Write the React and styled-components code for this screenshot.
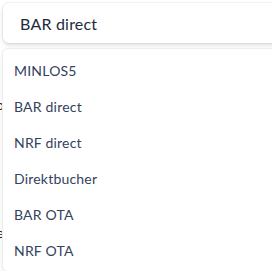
import React from "react";
import styled, { createGlobalStyle } from "styled-components";

const options = ["MINLOS5", "BAR direct", "NRF direct", "Direktbucher", "BAR OTA", "NRF OTA"];

const App = () => {
  return (
    <>
      <GlobalStyle />
      <Page>
        <Behind>
          <Peek $top={96}>Preiso</Peek>
          <Peek $top={224}>Rate</Peek>
        </Behind>
        <SelectBox>
          <Value>BAR direct</Value>
        </SelectBox>
        <Menu>
          {options.map((o) => (
            <Option key={o}>{o}</Option>
          ))}
        </Menu>
      </Page>
    </>
  );
};

export default App;

const GlobalStyle = createGlobalStyle`
  html, body {
    margin: 0;
    padding: 0;
    background: #ffffff;
    overflow: hidden;
  }
  body {
    font-family: "Lato", "Open Sans", sans-serif;
  }
`;

const Page = styled.div`
  position: relative;
  width: 272px;
  height: 271px;
  overflow: hidden;
  background: #ffffff;
`;

const Behind = styled.div`
  position: absolute;
  inset: 0;
`;

const Peek = styled.span`
  position: absolute;
  top: ${(p) => p.$top}px;
  right: calc(100% - 4px);
  font-size: 14px;
  color: #1f2a3c;
  white-space: nowrap;
`;

const SelectBox = styled.div`
  position: relative;
  margin: 3px -20px 0 3px;
  height: 40px;
  display: flex;
  align-items: center;
  padding-left: 17px;
  background: #ffffff;
  border-radius: 6px;
  box-shadow: 0 0 0 1px rgba(0, 0, 0, 0.04), 0 2px 4px rgba(0, 0, 0, 0.14);
`;

const Value = styled.span`
  font-size: 16px;
  color: #222b3b;
  letter-spacing: 0.2px;
`;

const Menu = styled.ul`
  position: absolute;
  top: 48px;
  left: 2px;
  right: -20px;
  height: 219px;
  margin: 0;
  padding: 3px 0 0;
  list-style: none;
  background: #ffffff;
  border: 1px solid #ececec;
  border-radius: 6px;
  box-shadow: 0 2px 6px rgba(0, 0, 0, 0.06);
`;

const Option = styled.li`
  height: 36px;
  display: flex;
  align-items: center;
  padding-left: 11px;
  font-size: 14px;
  letter-spacing: 0.2px;
  color: #34425e;
`;
